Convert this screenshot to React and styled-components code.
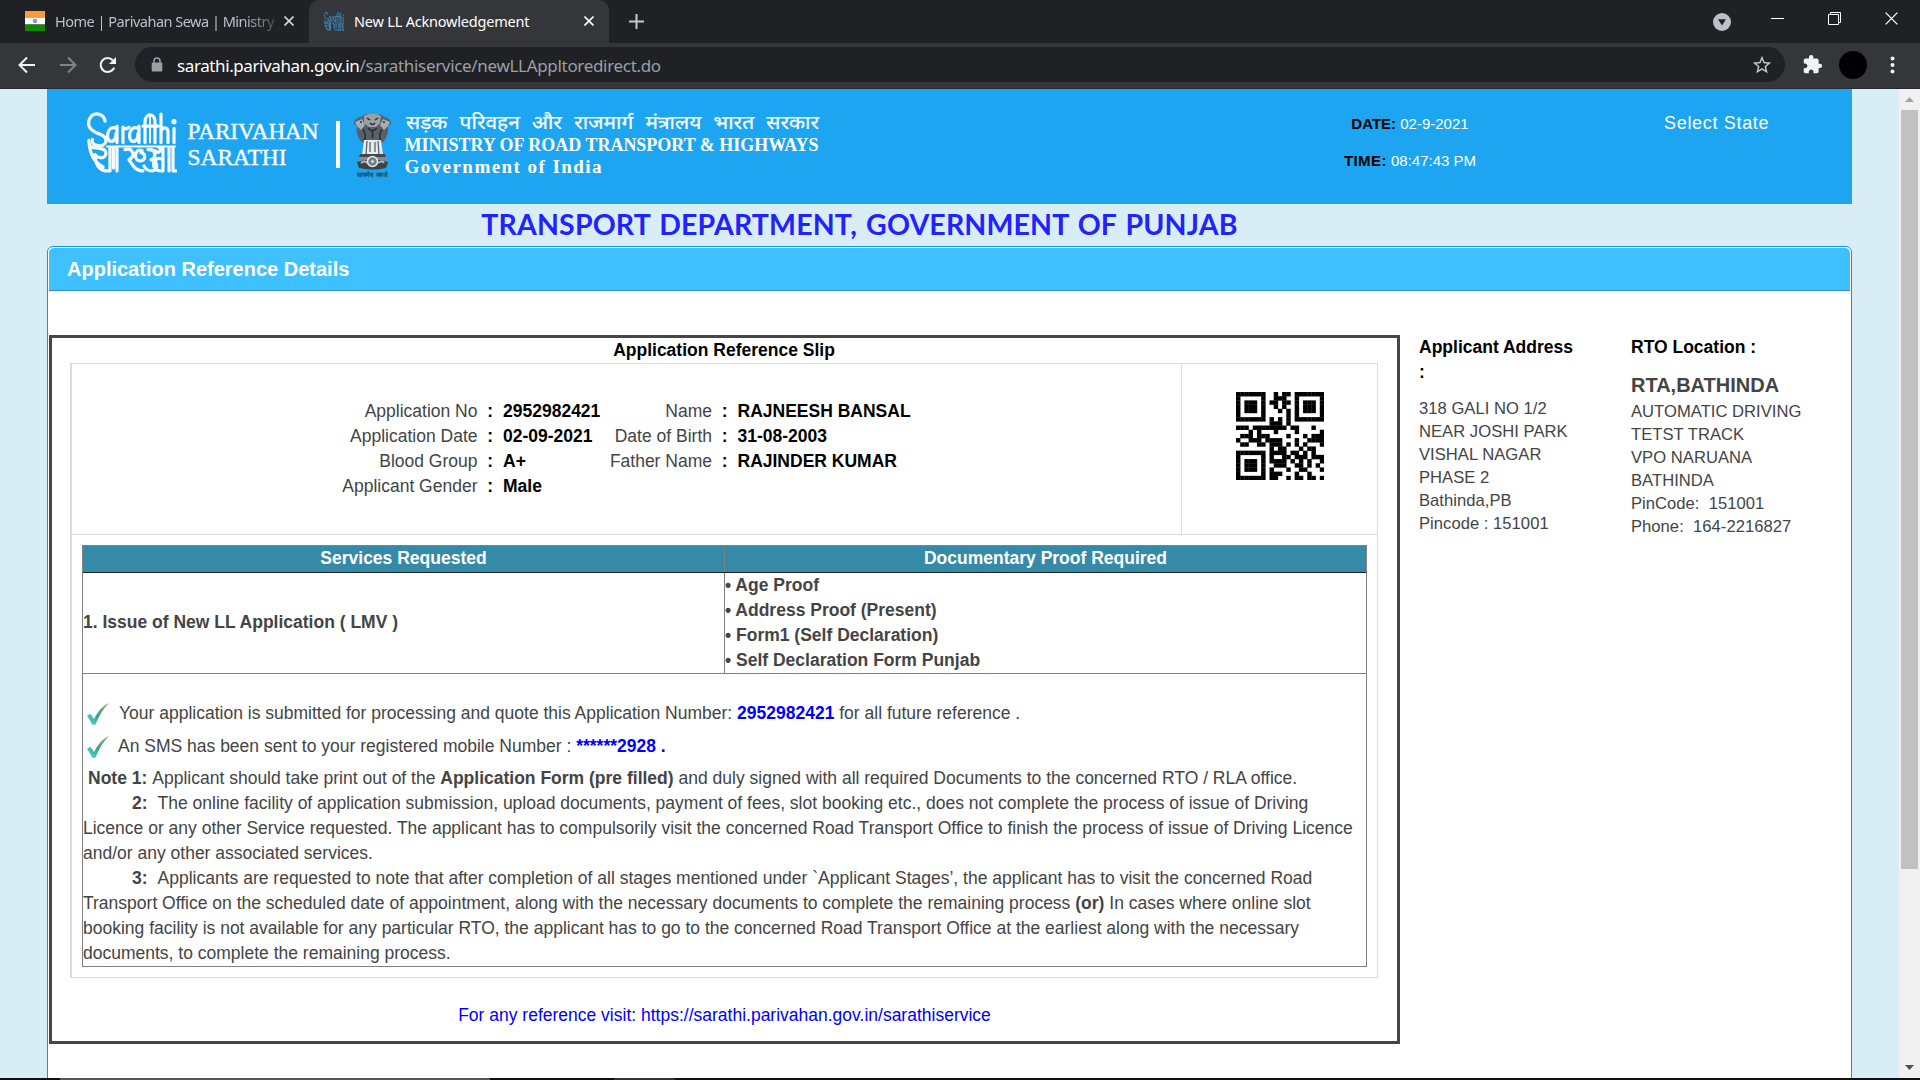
import React from "react";
import styled, { createGlobalStyle } from "styled-components";

const GlobalStyle = createGlobalStyle`
  * { box-sizing: border-box; }
  html, body { margin: 0; padding: 0; }
  body {
    width: 1920px;
    height: 1080px;
    overflow: hidden;
    background: #d9edf7;
    font-family: "Liberation Sans", Arial, sans-serif;
    color: #444;
  }
`;

const Window = styled.div`
  width: 1920px;
  height: 1080px;
  display: flex;
  flex-direction: column;
  overflow: hidden;
`;

/* ---------- browser chrome ---------- */

const TabStrip = styled.div`
  height: 43px;
  flex: none;
  display: flex;
  background: #202124;
  font-family: "Noto Sans", "Open Sans", sans-serif;
`;

const Tab = styled.div`
  width: ${(p) => p.$width}px;
  height: 43px;
  display: flex;
  align-items: center;
  padding: 0 15px ${(p) => (p.$active ? 1 : 2)}px ${(p) => p.$left}px;
  border-radius: 10px 10px 0 0;
  background: ${(p) => (p.$active ? "#35363a" : "transparent")};
  color: ${(p) => (p.$active ? "#fff" : "#bdc1c6")};
`;

const TabTitle = styled.div`
  flex: 1;
  margin-left: ${(p) => p.$gap}px;
  font-size: 14.5px;
  line-height: 20px;
  letter-spacing: ${(p) => p.$spacing}px;
  white-space: nowrap;
  ${(p) => p.$fade && "mask-image: linear-gradient(90deg, #000 82%, transparent 101%);"}
`;

const NewTab = styled.div`
  width: 54px;
  display: flex;
  align-items: center;
  justify-content: center;
  padding-bottom: 1px;
`;

const WindowControls = styled.div`
  margin-left: auto;
  display: flex;
  align-items: center;
  padding: 0 22px 6px 0;
  gap: 44px;
`;

const ChevronSlot = styled.div`
  display: flex;
  padding-top: 6px;
  margin-right: -4px;
`;

const Toolbar = styled.div`
  height: 46px;
  flex: none;
  display: flex;
  align-items: center;
  background: #35363a;
  border-bottom: 1px solid #28292c;
  padding: 0 25px 2px 17px;
`;

const NavIcons = styled.div`
  display: flex;
  width: 118px;
  gap: 20.5px;
`;

const Omnibox = styled.div`
  width: 1650px;
  height: 35px;
  border-radius: 18px;
  background: #202124;
  display: flex;
  align-items: center;
  padding: 0 12px 0 16px;
`;

const Url = styled.div`
  flex: 1;
  margin-left: 14px;
  padding-top: 2px;
  font-family: "Noto Sans", "Open Sans", sans-serif;
  font-size: 17px;
  line-height: 24px;
  letter-spacing: ${(p) => p.$spacing}px;
  color: #9aa0a6;
  white-space: nowrap;
`;

const Host = styled.span`
  color: #fff;
  letter-spacing: -0.4px;
`;

const ToolbarActions = styled.div`
  display: flex;
  align-items: center;
  margin-left: auto;
`;

const Avatar = styled.div`
  width: 28px;
  height: 28px;
  border-radius: 50%;
  background: #020005;
  margin: 0 23px 0 16px;
`;

/* ---------- page ---------- */

const Viewport = styled.div`
  height: 989px;
  flex: none;
  display: flex;
  background: #d9edf7;
`;

const PageArea = styled.div`
  width: 1899px;
  padding: 0 47px;
  overflow: hidden;
`;

const ScrollTrack = styled.div`
  width: 21px;
  background: #f1f1f1;
  display: flex;
  flex-direction: column;
  align-items: center;
`;

const ScrollArrow = styled.div`
  height: 21px;
  display: flex;
  align-items: center;
  justify-content: center;
`;

const ScrollThumb = styled.div`
  width: 17px;
  height: 759px;
  background: #c1c1c1;
  margin-bottom: auto;
`;

const Banner = styled.header`
  height: 115px;
  display: flex;
  background: #1da5f1;
  color: #fff;
`;

const BannerDrawing = styled.svg`
  flex: none;
  overflow: visible;
`;

const Clock = styled.div`
  width: 140px;
  margin-left: 513px;
  padding-top: 16px;
  text-align: center;
  font-size: 15px;
  line-height: 37px;
  white-space: nowrap;
`;

const ClockLabel = styled.b`
  color: #000;
  letter-spacing: ${(p) => p.$spacing || 0}px;
`;

const SelectState = styled.div`
  margin-left: 184px;
  padding-top: 22px;
  font-size: 18px;
  line-height: 24px;
  letter-spacing: 0.68px;
  white-space: nowrap;
`;

const Department = styled.h1`
  margin: 0;
  height: 42px;
  padding-right: 180px;
  text-align: center;
  font-family: Lato, "Open Sans", sans-serif;
  font-weight: 700;
  font-size: 28.5px;
  line-height: 40px;
  letter-spacing: ${(p) => p.$spacing}px;
  word-spacing: 2px;
  color: #2222ff;
  white-space: nowrap;
`;

const Panel = styled.section`
  height: 840px;
  background: #fff;
  border: 1px solid #0f9ad8;
  border-radius: 6px;
  padding: 1px 1px 0;
`;

const PanelTitle = styled.h2`
  margin: 0;
  height: 43px;
  background: #40c1ff;
  border-bottom: 1px solid #2e8fd0;
  border-radius: 5px 5px 0 0;
  padding-left: 18px;
  font-size: 20px;
  line-height: 42px;
  color: #fff;
`;

const Columns = styled.div`
  display: flex;
  padding-top: 44px;
`;

const Slip = styled.div`
  width: 1351px;
  height: 709px;
  border: 3px solid #464646;
  padding: 0 19px 0 18px;
  font-size: 17.5px;
  line-height: 25px;
`;

const SlipTitle = styled.div`
  height: 25px;
  text-align: center;
  font-weight: bold;
  color: #000;
`;

const SlipFrame = styled.div`
  height: 615px;
  border: 1px solid #dcdcdc;
  border-left-width: 2px;
`;

const Applicant = styled.div`
  height: 171px;
  display: flex;
  border-bottom: 1px solid #dcdcdc;
`;

const Facts = styled.dl`
  flex: 1;
  margin: 0;
  padding: 35px 0 0 252.5px;
  display: grid;
  grid-template-columns: 153px 25.5px 105px 104px 25.5px 200px;
  grid-auto-rows: 25px;
  white-space: nowrap;
`;

const FactLabel = styled.dt`
  text-align: right;
`;

const Colon = styled.span`
  text-align: center;
  font-weight: bold;
  color: #000;
`;

const FactValue = styled.dd`
  margin: 0;
  font-weight: bold;
  color: #000;
`;

const QrCell = styled.div`
  width: 196px;
  border-left: 1px solid #dcdcdc;
  padding: 28px 0 0 53.5px;
`;

const Services = styled.div`
  margin: 10px 10px 0;
  height: 422px;
  border: 1px solid #808080;
  white-space: nowrap;
`;

const ServicesHead = styled.div`
  display: grid;
  grid-template-columns: 642px 1fr;
  height: 27px;
  background: #348aa7;
  border-bottom: 1px solid #222;
  color: #fff;
  font-weight: bold;
  text-align: center;
`;

const HeadCell = styled.div`
  border-right: ${(p) => (p.$last ? 0 : 1)}px solid #808080;
`;

const ServicesRow = styled.div`
  display: grid;
  grid-template-columns: 642px 1fr;
  height: 101px;
  align-items: center;
  border-bottom: 1px solid #808080;
  font-weight: bold;
`;

const ServiceName = styled.div`
  height: 100px;
  line-height: 99px;
  border-right: 1px solid #808080;
`;

const Messages = styled.div`
  padding: 23px 0 3px 3px;
`;

const Message = styled.div`
  height: 33px;
  display: flex;
  align-items: center;
  gap: ${(p) => p.$gap}px;
`;

const MessageText = styled.div`
  padding-bottom: 1px;
`;

const Blue = styled.b`
  color: #0000ff;
`;

const NoteLine = styled.div`
  padding-left: ${(p) => p.$indent || 0}px;
`;

const NoteNumber = styled.b`
  margin-right: ${(p) => p.$gap || 5}px;
`;

const Visit = styled.div`
  padding: 25px 0 0 1px;
  text-align: center;
  color: #0000ff;
`;

const Address = styled.aside`
  width: ${(p) => p.$width}px;
  margin-left: ${(p) => p.$left}px;
  font-size: 16.6px;
  line-height: 23px;
  letter-spacing: 0.03px;
  white-space: pre;
`;

const AddressTitle = styled.h3`
  margin: 0 0 ${(p) => p.$gap}px;
  font-size: 17.5px;
  line-height: 25px;
  letter-spacing: 0;
  color: #000;
`;

const Office = styled.div`
  font-size: 20px;
  font-weight: bold;
  line-height: 29px;
  letter-spacing: 0;
`;

const Taskbar = styled.div`
  height: 2px;
  display: flex;
  background: #101010;
`;

const TaskSegment = styled.div`
  margin-left: ${(p) => p.$left}px;
  width: ${(p) => p.$width}px;
  background: ${(p) => p.$color};
`;

/* ---------- drawings ---------- */

const CloseIcon = ({ size = 10, color, width = 1.6 }) => (
  <svg width={size} height={size} viewBox="0 0 10 10" fill="none" stroke={color} strokeWidth={width}>
    <path d="M.5.5 9.5 9.5M9.5.5.5 9.5" />
  </svg>
);

const Flag = () => (
  <svg width="20" height="20" viewBox="0 0 20 20">
    <rect width="20" height="6.5" fill="#f93" />
    <rect y="6.5" width="20" height="7" fill="#fff" />
    <rect y="13.5" width="20" height="6.5" fill="#128807" />
    <circle cx="10" cy="10" r="2.2" fill="#8f8fd0" />
  </svg>
);

const SarathiMark = ({ width, height, color, stroke = 3.2 }) => (
  <svg width={width} height={height} viewBox="0 0 90 60" preserveAspectRatio="none" fill="none" stroke={color} strokeWidth={stroke} strokeLinecap="round" strokeLinejoin="round">
    <path d="M18 9C17 1 6-1 2.5 7c-4 9 5 13 11 15 8 3 7 12-2 11-5 0-7-3-6-6" />
    <path d="M29 16c-9-4-11 12-5 13 4 0 5-5 5-8M30 14v16M36 30V15c2 2 4 2 6 0M51 16c-9-4-11 12-5 13 4 0 5-5 5-8M52 14v16M58 30V10c0-9 9-10 10-1v21M74 30V2M74 20c1-6 7-6 7 0v10M87 16v14M56 14h15" />
    <path d="M63 30V5" strokeWidth="2" />
    <circle cx="87" cy="9.5" r="1" fill={color} />
    <path d="M20 34h68" strokeWidth="2" />
    <path d="M2 28c-1 9 8 7 12 8 7 1 6 9 0 9-4 0-6-3-6-3M8 44c1 8 5 14 13 14M2 30c1 12 6 20 14 24M23 35v23M30 35v23M26.5 35v20M38 37c8-2 11 6 4 10 3 4 6 11 14 11M55 38c-8-3-9 11-1 10 5-1 5-7 0-8M61 37c8-1 9 8 3 10 7 1 8 10 1 11-5 0-7-3-8-5M76 36v22M76 47c-10-6-14 11-2 11M68 38c4 5 8-3 4-3M82 35v23M86 35v23h3" />
  </svg>
);

const Chevron = () => (
  <svg width="18" height="18" viewBox="0 0 18 18">
    <circle cx="9" cy="9" r="9" fill="#bdc1c6" />
    <path d="M5 6.2h8L9 12.6z" fill="#202124" />
  </svg>
);

const Minimise = () => (
  <svg width="13" height="13" viewBox="0 0 13 13">
    <rect y="6" width="13" height="1" fill="#fff" />
  </svg>
);

const Restore = () => (
  <svg width="13" height="13" viewBox="0 0 13 13" fill="none" stroke="#fff">
    <path d="M.5 2.5h10v10H.5zM2.5 2.5V.5h10v10h-2" />
  </svg>
);

const Arrow = ({ color, flip }) => (
  <svg width="20" height="20" viewBox="0 0 20 20" fill="none" stroke={color} strokeWidth="2">
    <path d={flip ? "M2 10h15M10 2.5l7.5 7.5-7.5 7.5" : "M18 10H3M10 2.5 2.5 10l7.5 7.5"} />
  </svg>
);

const Reload = () => (
  <svg width="20" height="20" viewBox="0 0 20 20">
    <path d="M16.2 12.6A7 7 0 1 1 14.8 5.2" fill="none" stroke="#f1f3f4" strokeWidth="2.1" />
    <path d="M18 2v7h-7z" fill="#f1f3f4" />
  </svg>
);

const Lock = () => (
  <svg width="12" height="15" viewBox="0 0 12 15">
    <path d="M3 6V4a3 3 0 0 1 6 0v2" fill="none" stroke="#9aa0a6" strokeWidth="1.5" />
    <rect x=".7" y="5.5" width="10.6" height="9" rx="1" fill="#9aa0a6" />
  </svg>
);

const Star = () => (
  <svg width="22" height="22" viewBox="0 0 24 24">
    <path
      fill="#c4c7cb"
      d="M22 9.24l-7.19-.62L12 2 9.19 8.63 2 9.24l5.46 4.73L5.82 21 12 17.27 18.18 21l-1.63-7.03L22 9.24zM12 15.4l-3.76 2.27 1-4.28-3.32-2.88 4.38-.38L12 6.1l1.71 4.04 4.38.38-3.32 2.88 1 4.28L12 15.4z"
    />
  </svg>
);

const Puzzle = () => (
  <svg width="21" height="21" viewBox="0 0 24 24">
    <path
      fill="#f1f3f4"
      d="M20.5 11H19V7c0-1.1-.9-2-2-2h-4V3.5a2.5 2.5 0 0 0-5 0V5H4c-1.1 0-1.99.9-1.99 2v3.8H3.5c1.49 0 2.7 1.21 2.7 2.7s-1.21 2.7-2.7 2.7H2V20c0 1.1.9 2 2 2h3.8v-1.5c0-1.49 1.21-2.7 2.7-2.7s2.7 1.21 2.7 2.7V22H17c1.1 0 2-.9 2-2v-4h1.5a2.5 2.5 0 0 0 0-5z"
    />
  </svg>
);

const Dots = () => (
  <svg width="5" height="18" viewBox="0 0 5 18" fill="#f1f3f4">
    <circle cx="2.5" cy="2.5" r="2" />
    <circle cx="2.5" cy="9" r="2" />
    <circle cx="2.5" cy="15.5" r="2" />
  </svg>
);

const Emblem = () => (
  <g transform="translate(306 24)">
    <path d="M8 4C12 0 16 1 19.5 1S28 0 31 4c4 0 8 4 7 7l-3 2c1 6-1 11-4 15l-2 2H10l-3-3C4 23 3 18 4 13L1 11C0 8 4 4 8 4z" fill="#56616a" />
    <path d="M11 3c4-3 13-3 17 0l-1 7-4 4h-7l-5-4z" fill="#9ba2a6" />
    <path d="M2 9l7-3 3 6-4 5-4-4zM37 9l-7-3-3 6 4 5 4-4z" fill="#a9aeb1" />
    <path d="M14 5l3 2M25 5l-3 2M17 10q2.5 3 5 0M7 9h2M30 9h2M10 16q4 8 1 12M29 16q-4 8-1 12M15 15q4 5 9 0M19.5 17v8" stroke="#252b30" strokeWidth="1.5" fill="none" />
    <path d="M11 27h17l2 15H9z" fill="#e8eaeb" />
    <path d="M14 28l-1 14M17 29v10M22 29v10M25 28l1 14" stroke="#59646c" strokeWidth="1.3" />
    <path d="M7 41h25l1 3H6z" fill="#40484e" />
    <path d="M5 44h30l-2 4H7z" fill="#848b90" />
    <path d="M4 49q15-5 31 0l-2 6q-13 3-27 0z" fill="#3b4349" />
    <circle cx="19.5" cy="48.5" r="5" fill="#777f84" stroke="#e9ebec" strokeWidth="1.5" />
    <circle cx="19.5" cy="48.5" r="1.3" fill="#eee" />
    <path d="M8 50q4-3 6 0M25 50q4-3 6 0" stroke="#b6babd" strokeWidth="1.8" fill="none" />
    <text x="4" y="63.5" fontSize="6.5" fontWeight="bold" textLength="31" lengthAdjust="spacingAndGlyphs" fill="#17445e">सत्यमेव जयते</text>
  </g>
);

const BannerArt = () => (
  <BannerDrawing width="780" height="115" viewBox="0 0 780 115" fill="#fff">
    <g transform="translate(40 23)">
      <SarathiMark width={90} height={61} color="#f4faff" />
    </g>
    <g fontFamily="Liberation Serif, Times New Roman, serif">
      <g fontSize="22.5">
        <text x="140.5" y="50" textLength="131" lengthAdjust="spacingAndGlyphs" stroke="#fff" strokeWidth=".35">PARIVAHAN</text>
        <text x="140.5" y="76" textLength="99" lengthAdjust="spacingAndGlyphs" stroke="#fff" strokeWidth=".35">SARATHI</text>
      </g>
      <text x="357.5" y="61.5" fontSize="18.5" fontWeight="bold" textLength="414" lengthAdjust="spacingAndGlyphs">MINISTRY OF ROAD TRANSPORT &amp; HIGHWAYS</text>
      <text x="357.5" y="84" fontSize="19" fontWeight="bold" textLength="197">Government of India</text>
    </g>
    <rect x="289" y="32" width="4" height="47" />
    <Emblem />
    <text x="359" y="40" fontSize="18.5" fontFamily="Noto Sans, sans-serif" stroke="#fff" strokeWidth=".2" wordSpacing="6" textLength="413" lengthAdjust="spacingAndGlyphs">सड़क परिवहन और राजमार्ग मंत्रालय भारत सरकार</text>
  </BannerDrawing>
);

const QR_ROWS = [
  "#######..#.##.#######",
  "#.....#..###..#.....#",
  "#.###.#.##.##.#.###.#",
  "#.###.#..#.#..#.###.#",
  "#.###.#...#.#.#.###.#",
  "#.....#.....#.#.....#",
  "#######.#.#.#.#######",
  "........###.#........",
  "###.########.##...#..",
  "...#.#...#....#.....#",
  ".###.###....#...#.###",
  "#..###.####...#..####",
  ".##..##.###.#.#.#...#",
  "........#.##...#.##..",
  "#######.####.##.#.#..",
  "#.....#.#..##.###.###",
  "#.###.#.####.#.#.#..#",
  "#.###.#..###..##.#.#.",
  "#.###.#.#...#..##...#",
  "#.....#.###...#..#...",
  "#######.##..#.##.##.#",
];

const QrCode = () => (
  <svg width="88" height="88" viewBox="0 0 21 21" fill="#000">
    {QR_ROWS.map((row, y) =>
      [...row].map((cell, x) => (cell === "#" ? <rect key={`${x}-${y}`} x={x} y={y} width="1.06" height="1.06" /> : null))
    )}
  </svg>
);

const Check = () => (
  <svg width="24" height="24" viewBox="0 0 24 24">
    <defs>
      <linearGradient id="tick" x1="0" y1="1" x2="1" y2="0">
        <stop offset="0" stopColor="#4fe0e6" />
        <stop offset=".45" stopColor="#35a68c" />
        <stop offset="1" stopColor="#b0ac68" />
      </linearGradient>
    </defs>
    <path d="M1 13.5 4.5 12 8 17C11.5 10 16 4 23 1c-6 6-10 13-13.5 21.5l-3 .5z" fill="url(#tick)" />
  </svg>
);

const Triangle = ({ down, color }) => (
  <svg width="9" height="5" viewBox="0 0 9 5">
    <path d={down ? "M0 0h9L4.5 5z" : "M0 5h9L4.5 0z"} fill={color} />
  </svg>
);

/* ---------- content ---------- */

const FACTS = [
  ["Application No", "2952982421", "Name", "RAJNEESH BANSAL"],
  ["Application Date", "02-09-2021", "Date of Birth", "31-08-2003"],
  ["Blood Group", "A+", "Father Name", "RAJINDER KUMAR"],
  ["Applicant Gender", "Male", null, null],
];

const PROOFS = ["Age Proof", "Address Proof (Present)", "Form1 (Self Declaration)", "Self Declaration Form Punjab"];

function BrowserChrome() {
  return (
    <>
      <TabStrip>
        <Tab $width={309} $left={25}>
          <Flag />
          <TabTitle $gap={10} $spacing={-0.5} $fade>Home | Parivahan Sewa | Ministry</TabTitle>
          <CloseIcon color="#d5d7da" />
        </Tab>
        <Tab $width={300} $left={15} $active>
          <SarathiMark width={20} height={19} color="#3f7ba6" stroke={3.5} />
          <TabTitle $gap={10} $spacing={-0.2}>New LL Acknowledgement</TabTitle>
          <CloseIcon color="#fff" />
        </Tab>
        <NewTab>
          <svg width="15" height="15" viewBox="0 0 15 15" stroke="#c6c9cd" strokeWidth="2">
            <path d="M7.5 0v15M0 7.5h15" />
          </svg>
        </NewTab>
        <WindowControls>
          <ChevronSlot><Chevron /></ChevronSlot>
          <Minimise />
          <Restore />
          <CloseIcon size={13} width={1} color="#fff" />
        </WindowControls>
      </TabStrip>
      <Toolbar>
        <NavIcons>
          <Arrow color="#f1f3f4" />
          <Arrow color="#808286" flip />
          <Reload />
        </NavIcons>
        <Omnibox>
          <Lock />
          <Url $spacing={-0.32}>
            <Host>sarathi.parivahan.gov.in</Host>/sarathiservice/newLLAppltoredirect.do
          </Url>
          <Star />
        </Omnibox>
        <ToolbarActions>
          <Puzzle />
          <Avatar />
          <Dots />
        </ToolbarActions>
      </Toolbar>
    </>
  );
}

function ReferenceSlip() {
  return (
    <Slip>
      <SlipTitle>Application Reference Slip</SlipTitle>
      <SlipFrame>
        <Applicant>
          <Facts>
            {FACTS.map(([label, value, label2, value2]) => (
              <React.Fragment key={label}>
                <FactLabel>{label}</FactLabel>
                <Colon>:</Colon>
                <FactValue>{value}</FactValue>
                {label2 && (
                  <>
                    <FactLabel>{label2}</FactLabel>
                    <Colon>:</Colon>
                    <FactValue>{value2}</FactValue>
                  </>
                )}
              </React.Fragment>
            ))}
          </Facts>
          <QrCell><QrCode /></QrCell>
        </Applicant>
        <Services>
          <ServicesHead>
            <HeadCell>Services Requested</HeadCell>
            <HeadCell $last>Documentary Proof Required</HeadCell>
          </ServicesHead>
          <ServicesRow>
            <ServiceName>1. Issue of New LL Application ( LMV )</ServiceName>
            <div>
              {PROOFS.map((p) => <div key={p}>• {p}</div>)}
            </div>
          </ServicesRow>
          <Messages>
            <Message $gap={9}>
              <Check />
              <MessageText>
                Your application is submitted for processing and quote this Application Number: <Blue>2952982421</Blue> for all future reference .
              </MessageText>
            </Message>
            <Message $gap={8}>
              <Check />
              <MessageText>
                An SMS has been sent to your registered mobile Number : <Blue>******2928 .</Blue>
              </MessageText>
            </Message>
          </Messages>
          <NoteLine $indent={5}>
            <NoteNumber>Note 1:</NoteNumber>Applicant should take print out of the <b>Application Form (pre filled)</b> and duly signed with all required Documents to the concerned RTO / RLA office.
          </NoteLine>
          <NoteLine $indent={49}>
            <NoteNumber $gap={10}>2:</NoteNumber>The online facility of application submission, upload documents, payment of fees, slot booking etc., does not complete the process of issue of Driving
          </NoteLine>
          <NoteLine>Licence or any other Service requested. The applicant has to compulsorily visit the concerned Road Transport Office to finish the process of issue of Driving Licence</NoteLine>
          <NoteLine>and/or any other associated services.</NoteLine>
          <NoteLine $indent={49}>
            <NoteNumber $gap={10}>3:</NoteNumber>Applicants are requested to note that after completion of all stages mentioned under `Applicant Stages’, the applicant has to visit the concerned Road
          </NoteLine>
          <NoteLine>Transport Office on the scheduled date of appointment, along with the necessary documents to complete the remaining process <b>(or)</b> In cases where online slot</NoteLine>
          <NoteLine>booking facility is not available for any particular RTO, the applicant has to go to the concerned Road Transport Office at the earliest along with the necessary</NoteLine>
          <NoteLine>documents, to complete the remaining process.</NoteLine>
        </Services>
      </SlipFrame>
      <Visit>For any reference visit: https://sarathi.parivahan.gov.in/sarathiservice</Visit>
    </Slip>
  );
}

export default function App() {
  return (
    <Window>
      <GlobalStyle />
      <BrowserChrome />
      <Viewport>
        <PageArea>
          <Banner>
            <BannerArt />
            <Clock>
              <div><ClockLabel>DATE:</ClockLabel> 02-9-2021</div>
              <div><ClockLabel $spacing={0.4}>TIME:</ClockLabel> 08:47:43 PM</div>
            </Clock>
            <SelectState>Select State</SelectState>
          </Banner>
          <Department $spacing={0.15}>TRANSPORT DEPARTMENT, GOVERNMENT OF PUNJAB</Department>
          <Panel>
            <PanelTitle>Application Reference Details</PanelTitle>
            <Columns>
              <ReferenceSlip />
              <Address $left={19} $width={170}>
                <AddressTitle $gap={12}>{"Applicant Address\n:"}</AddressTitle>
                {"318 GALI NO 1/2\nNEAR JOSHI PARK\nVISHAL NAGAR\nPHASE 2\nBathinda,PB\nPincode : 151001"}
              </Address>
              <Address $left={42} $width={200}>
                <AddressTitle $gap={11}>RTO Location :</AddressTitle>
                <Office>RTA,BATHINDA</Office>
                {"AUTOMATIC DRIVING\nTETST TRACK\nVPO NARUANA\nBATHINDA\nPinCode:  151001\nPhone:  164-2216827"}
              </Address>
            </Columns>
          </Panel>
        </PageArea>
        <ScrollTrack>
          <ScrollArrow><Triangle color="#a3a3a3" /></ScrollArrow>
          <ScrollThumb />
          <ScrollArrow><Triangle down color="#505050" /></ScrollArrow>
        </ScrollTrack>
      </Viewport>
      <Taskbar>
        <TaskSegment $left={60} $width={430} $color="#555" />
        <TaskSegment $left={124} $width={61} $color="#333" />
      </Taskbar>
    </Window>
  );
}
